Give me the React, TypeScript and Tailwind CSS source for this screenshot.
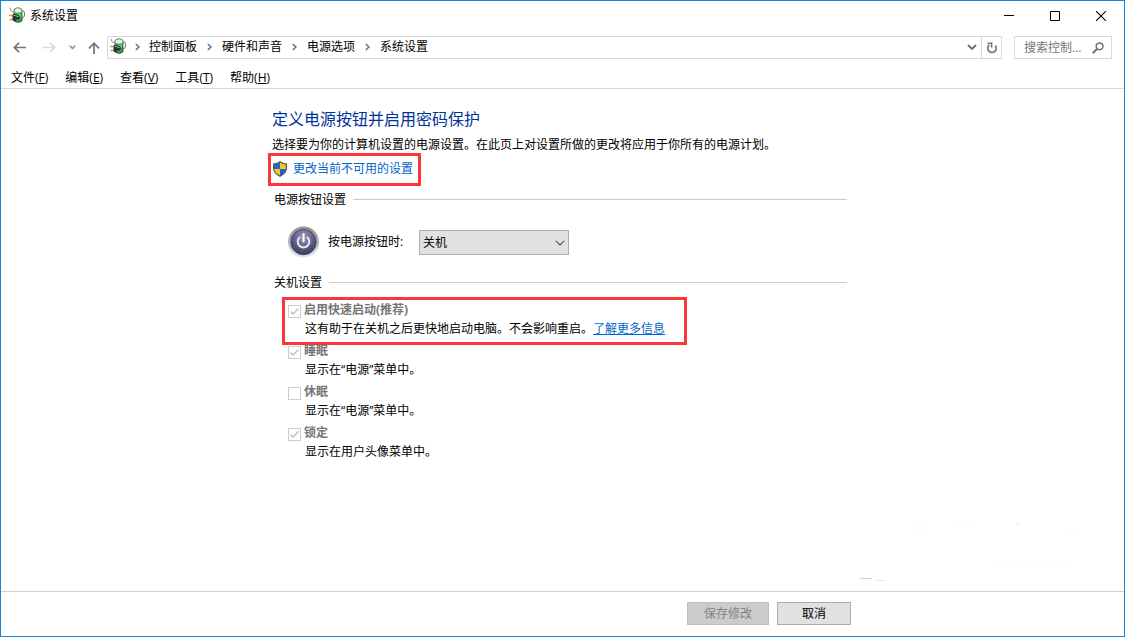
import React from "react";

const FONT = "font-['Open_Sans','Noto_Sans_CJK_SC',sans-serif]";

function PowerPlanIcon() {
  return (
    <svg viewBox="0 0 16 16" className="h-4 w-4 shrink-0" aria-hidden="true">
      <path d="M12.500 4 H14 Q15.500 4 15.500 6 V8 Q15.500 10.500 13 11" fill="none" stroke="#6d7673" strokeWidth="1" />
      <path d="M5 2.500 Q9 -.8 13 2.500 V14 Q9 17 5 14 Z" fill="#2da544" stroke="#2b3b30" strokeWidth=".7" />
      <path d="M5.500 2.500 Q9 -.2 12.500 2.500 V5 Q9 6.500 5.500 5 Z" fill="#e6efe9" />
      <path d="M9 6.500 H12.200 V10 H9 Z" fill="#58d363" />
      <path d="M.8 .5 Q1.200 4.300 4.500 5 L6.500 7" fill="none" stroke="#8b94a3" strokeWidth="1" />
      <path d="M0 8.500 H4 M.5 12.500 H5" stroke="#d89a18" strokeWidth="1.400" />
      <path d="M4 7 H6.500 L8 8.200 H10 L11 10.300 L10 12.300 H8 L6.500 14 H4 Q2.800 10.500 4 7Z" fill="#303134" />
      <path d="M4.600 8.500 H6.800 L8 9.500 H9.500" fill="none" stroke="#a3a4a8" strokeWidth="1" />
    </svg>
  );
}

function ShieldIcon() {
  return (
    <svg viewBox="0 0 14 16" className="h-4 w-3.5 shrink-0" aria-hidden="true">
      <path d="M7 0 Q9.500 2.300 14 2.500 V7.500 Q13.500 13 7 16 Q.5 13 0 7.500 V2.500 Q4.500 2.300 7 0Z" fill="#575a5d" />
      <path d="M7 1.400 V8 H1.200 V3.500 Q4.800 3.200 7 1.400Z" fill="#0f6fc6" />
      <path d="M7 1.400 Q9.200 3.200 12.800 3.500 V8 H7Z" fill="#fdbf2d" />
      <path d="M1.200 8 H7 V14.600 Q1.700 12 1.200 8Z" fill="#fdbf2d" />
      <path d="M12.800 8 H7 V14.600 Q12.300 12 12.800 8Z" fill="#0f6fc6" />
    </svg>
  );
}

function PowerButtonIcon() {
  return (
    <svg viewBox="0 0 32 32" className="h-8 w-8 shrink-0" aria-hidden="true">
      <defs>
        <linearGradient id="rim" x1="0" y1="0" x2="0" y2="1">
          <stop offset="0" stopColor="#8d8d92" />
          <stop offset=".5" stopColor="#b4b4ba" />
          <stop offset="1" stopColor="#e8e8ec" />
        </linearGradient>
        <radialGradient id="face" cx=".5" cy=".3" r=".75">
          <stop offset="0" stopColor="#9a9bb8" />
          <stop offset=".55" stopColor="#5d5d80" />
          <stop offset="1" stopColor="#34345a" />
        </radialGradient>
      </defs>
      <circle cx="15.500" cy="16" r="15.500" fill="url(#rim)" />
      <circle cx="15.500" cy="16" r="13.200" fill="#c3c3cc" />
      <circle cx="15.500" cy="16" r="12.700" fill="url(#face)" stroke="#3e3e5c" strokeWidth=".8" />
      <path d="M11.500 11.500 A5.800 5.800 0 1 0 19.500 11.500" fill="none" stroke="#e6e6f0" strokeWidth="2" strokeLinecap="round" />
      <path d="M15.500 8 V15.500" stroke="#f8f8fc" strokeWidth="2.200" strokeLinecap="round" />
    </svg>
  );
}

function Crumb({ label, first = false }: { label: string; first?: boolean }) {
  return (
    <li className="flex items-center">
      <span className={first ? "flex w-[23px] justify-center" : "flex w-[25px] justify-center"}>
        <svg viewBox="0 0 5 8" className="h-2 w-[5px]" aria-hidden="true">
          <path d="M.8 1 L3.900 4 L.8 7" fill="none" stroke="#6e6e6e" strokeWidth="1.500" />
        </svg>
      </span>
      <a href="#" className="text-black">{label}</a>
    </li>
  );
}

function SectionTitle({ children }: { children: React.ReactNode }) {
  return (
    <div className="flex items-center gap-[7px] pl-[3px]">
      <h2 className="pt-0.5 leading-4">{children}</h2>
      <div className="h-px flex-1 bg-[#cbcbcb]" />
    </div>
  );
}

interface Option {
  id: string;
  label: string;
  note: string;
  checked: boolean;
  link?: string;
}

const options: Option[] = [
  { id: "fast", label: "启用快速启动(推荐)", note: "这有助于在关机之后更快地启动电脑。不会影响重启。", checked: true, link: "了解更多信息" },
  { id: "sleep", label: "睡眠", note: "显示在“电源”菜单中。", checked: true },
  { id: "hibernate", label: "休眠", note: "显示在“电源”菜单中。", checked: false },
  { id: "lock", label: "锁定", note: "显示在用户头像菜单中。", checked: true },
];

function OptionRow({ option }: { option: Option }) {
  return (
    <li className="relative">
      <div className="flex h-[18px] items-center gap-[3px]">
        <span className="relative mt-[3px] h-[13px] w-[13px]">
          <input
            id={option.id}
            type="checkbox"
            disabled
            defaultChecked={option.checked}
            className="block h-[13px] w-[13px] appearance-none border border-[#cccccc] bg-white"
          />
          {option.checked && (
            <svg viewBox="0 0 13 13" className="pointer-events-none absolute inset-0 h-[13px] w-[13px]" aria-hidden="true">
              <path d="M2.500 6.500 L5 9 L10.500 3.500" fill="none" stroke="#bcbcbc" strokeWidth="1.300" />
            </svg>
          )}
        </span>
        <label htmlFor={option.id} className="font-bold leading-[18px] text-[#757575]">{option.label}</label>
      </div>
      <p className="pl-[17px] leading-5">
        {option.note}
        {option.link && <a href="#" className="text-[#0066cc] underline">{option.link}</a>}
      </p>
      {option.link && (
        <div className="pointer-events-none absolute -left-1.5 -top-1 h-12 w-[405px] border-[3px] border-[#fb3538]" />
      )}
    </li>
  );
}

const menus = [
  ["文件", "F"],
  ["编辑", "E"],
  ["查看", "V"],
  ["工具", "T"],
  ["帮助", "H"],
];

export default function App() {
  return (
    <div className={`${FONT} relative flex min-h-screen flex-col border border-[#1883d7] bg-white text-xs text-black`}>
      <header className="border-b border-[#d9d9d9]">
        <div className="flex h-[30px] items-center pl-2">
          <span className="pb-0.5"><PowerPlanIcon /></span>
          <h1 className="flex-1 pl-[5px] leading-[18px]">系统设置</h1>
          <button aria-label="最小化" className="flex h-[30px] w-[46px] items-center justify-center">
            <svg viewBox="0 0 10 10" className="h-2.5 w-2.5"><path d="M0 4.500 H10" stroke="#000" /></svg>
          </button>
          <button aria-label="最大化" className="flex h-[30px] w-[46px] items-center justify-center">
            <svg viewBox="0 0 10 10" className="h-2.5 w-2.5"><path d="M.5 .5 H9.500 V9.500 H.5Z" fill="none" stroke="#000" /></svg>
          </button>
          <button aria-label="关闭" className="flex h-[30px] w-[46px] items-center justify-center">
            <svg viewBox="0 0 10 10" className="h-2.5 w-2.5"><path d="M0 0 L10 10 M10 0 L0 10" stroke="#000" strokeWidth="1.100" /></svg>
          </button>
        </div>

        <div className="flex items-center pl-3 pr-3 pt-[5px]">
          <button aria-label="后退" className="w-[30px]">
            <svg viewBox="0 0 13 11" className="h-[11px] w-[13px]"><path d="M13 5.500 H1.500 M6 .8 L1.300 5.500 L6 10.200" fill="none" stroke="#777" strokeWidth="1.700" /></svg>
          </button>
          <button aria-label="前进" disabled className="w-[26px]">
            <svg viewBox="0 0 13 11" className="h-[11px] w-[13px]"><path d="M0 5.500 H11.500 M7 .8 L11.700 5.500 L7 10.200" fill="none" stroke="#dadada" strokeWidth="1.700" /></svg>
          </button>
          <button aria-label="最近位置" className="w-[19px]">
            <svg viewBox="0 0 7 5" className="h-[5px] w-[7px]"><path d="M.8 .8 L3.500 3.500 L6.200 .8" fill="none" stroke="#8a8a8a" strokeWidth="1.500" /></svg>
          </button>
          <button aria-label="向上" className="w-[19px]">
            <svg viewBox="0 0 12 12" className="h-3 w-3"><path d="M6 12 V1.500 M1 6.300 L6 1.300 L11 6.300" fill="none" stroke="#777" strokeWidth="1.700" /></svg>
          </button>
          <nav className="flex h-[23px] flex-1 items-center border border-[#d9d9d9] pl-0.5">
            <span className="pb-[3px]"><PowerPlanIcon /></span>
            <ol className="flex flex-1 items-center pb-0.5 leading-[18px]">
              <Crumb first label="控制面板" />
              <Crumb label="硬件和声音" />
              <Crumb label="电源选项" />
              <Crumb label="系统设置" />
            </ol>
            <button aria-label="历史记录" className="flex h-full w-5 items-center justify-center border-r border-[#d9d9d9]">
              <svg viewBox="0 0 10 7" className="h-[7px] w-2.5"><path d="M1 1 L5 5 L9 1" fill="none" stroke="#707070" strokeWidth="1.900" /></svg>
            </button>
            <button aria-label="刷新" className="flex h-full w-[19px] items-center justify-center">
              <svg viewBox="0 0 12 12" className="h-3 w-3">
                <path d="M3.300 3 A4.200 4.200 0 1 0 9.300 3.600" fill="none" stroke="#777" strokeWidth="1.800" />
                <path d="M1.500 1.300 H5.600 V5.400" fill="none" stroke="#777" strokeWidth="1.600" />
              </svg>
            </button>
          </nav>
          <label className="ml-3 flex h-[23px] w-[98px] items-center border border-[#d9d9d9] pl-[9px] pr-[7px]">
            <input type="text" aria-label="搜索" placeholder="搜索控制..." className="w-0 min-w-0 flex-1 bg-transparent leading-[18px] outline-none placeholder:text-[#757575]" />
            <svg viewBox="0 0 12 12" className="h-3 w-3 shrink-0" aria-hidden="true">
              <circle cx="7.600" cy="4.300" r="3.400" fill="none" stroke="#707070" strokeWidth="1.500" />
              <path d="M5.200 6.800 L.8 11.200" stroke="#707070" strokeWidth="2" />
            </svg>
          </label>
        </div>

        <div className="flex h-[29px] items-end gap-[17px] pb-px pl-2.5">
          {menus.map(([name, key]) => (
            <button key={key} className="leading-[18px]">
              {name}(<u>{key}</u>)
            </button>
          ))}
        </div>
      </header>

      <main className="flex-1">
        <div className="mx-auto w-[583px] pr-[7px] pt-[18px]">
          <h2 className="pl-px text-base leading-6 text-[#003399]">定义电源按钮并启用密码保护</h2>
          <p className="mt-1 whitespace-nowrap pl-px pt-0.5 leading-4">
            选择要为你的计算机设置的电源设置。在此页上对设置所做的更改将应用于你所有的电源计划。
          </p>
          <a href="#" className="-ml-[3px] flex h-[33px] w-[153px] items-center gap-[6px] border-[3px] border-[#fb3538] pb-0.5 pl-0.5 text-[#0066cc]">
            <ShieldIcon />
            更改当前不可用的设置
          </a>

          <div className="mt-1">
            <SectionTitle>电源按钮设置</SectionTitle>
          </div>
          <div className="mt-[18px] flex items-center pl-[17px]">
            <PowerButtonIcon />
            <label htmlFor="power-action" className="w-[99px] pl-2 leading-[18px]">按电源按钮时:</label>
            <div className="relative">
              <select id="power-action" defaultValue="off" className="block h-[25px] w-[150px] appearance-none border border-[#adadad] bg-[#e1e1e1] pl-[3px] pt-0.5 text-xs text-black">
                <option value="off">关机</option>
                <option value="sleep">睡眠</option>
                <option value="none">不采取任何操作</option>
              </select>
              <svg viewBox="0 0 10 6" className="pointer-events-none absolute right-1 top-2.5 h-1.5 w-2.5" aria-hidden="true">
                <path d="M.8 .8 L5 5 L9.200 .8" fill="none" stroke="#555" strokeWidth="1.100" />
              </svg>
            </div>
          </div>

          <div className="mt-[15px]">
            <SectionTitle>关机设置</SectionTitle>
          </div>
          <ul className="mt-2.5 flex flex-col gap-[3px] pl-[17px]">
            {options.map((option) => (
              <OptionRow key={option.id} option={option} />
            ))}
          </ul>
        </div>
      </main>

      <svg viewBox="0 0 240 70" className="pointer-events-none absolute bottom-[50px] right-[30px] h-[70px] w-[240px]" aria-hidden="true">
        <path d="M6 62.500 H18" stroke="#d2d2d2" />
        <path d="M22 64.500 H32" stroke="#e9e9e6" />
        <path d="M162 8.500 H165" stroke="#efefc4" />
        <circle cx="218" cy="14" r="1.300" fill="#f2f4d2" />
        <path d="M57 12 H75 M98 5 H120 M135 48 H215" stroke="#fefefb" strokeWidth="3" />
      </svg>

      <footer className="border-t border-[#cfcfcf]">
        <div className="mx-auto flex w-[583px] justify-end gap-2 pb-[11px] pr-[3px] pt-2.5">
          <button disabled className="h-[23px] w-[82px] border border-[#bfbfbf] bg-[#cccccc] text-[#838383]">保存修改</button>
          <button className="h-[23px] w-[74px] border border-[#adadad] bg-[#e1e1e1]">取消</button>
        </div>
      </footer>
    </div>
  );
}
